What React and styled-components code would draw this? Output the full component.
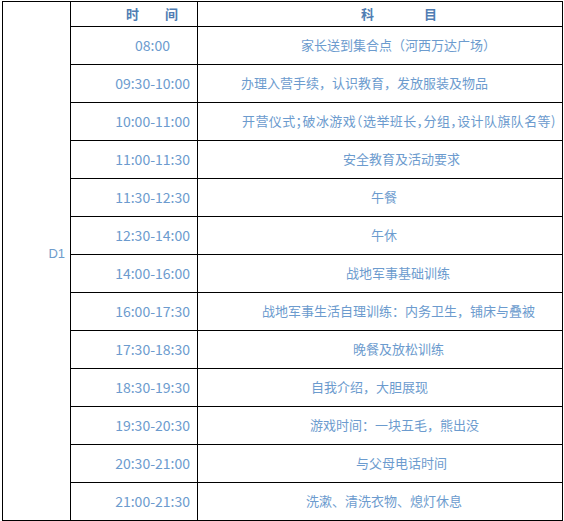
import styled, { createGlobalStyle } from 'styled-components';

const GlobalStyle = createGlobalStyle`
  html, body {
    margin: 0;
    padding: 0;
    background: #fff;
  }
  body {
    font-family: "Noto Sans CJK SC", "Microsoft YaHei", sans-serif;
  }
`;

const Page = styled.div`
  width: 564px;
  height: 521px;
  padding: 1px 0 0 2px;
  box-sizing: border-box;
  overflow: hidden;
`;

const Table = styled.table`
  width: 561px;
  border-collapse: collapse;
  table-layout: fixed;
  border: 1px solid #000;
`;

const HeadRow = styled.tr`
  height: 25px;
`;

const Row = styled.tr`
  height: 38px;
`;

const DayCell = styled.td`
  border: 1px solid #000;
  text-align: right;
  padding: 0 5px 16px 0;
  vertical-align: middle;
  color: #6f9ccc;
  font-family: "Liberation Sans", sans-serif;
  font-size: 13px;
`;

const HeadCell = styled.th`
  border: 1px solid #000;
  padding: 0 0 2px ${({ $indent }) => $indent}px;
  color: #4f7db3;
  font-size: 13px;
  font-weight: bold;
  text-align: left;
  vertical-align: middle;
  white-space: nowrap;
`;

const Spacer = styled.span`
  display: inline-block;
  width: ${({ $w }) => $w}px;
`;

const TimeCell = styled.td`
  border: 1px solid #000;
  padding: 0 ${({ $pad }) => $pad}px 2px 0;
  text-align: right;
  color: #6c9bce;
  font-size: 14px;
  vertical-align: middle;
  white-space: nowrap;
`;

const SubjectCell = styled.td`
  border: 1px solid #000;
  padding: 0 0 2px ${({ $indent }) => $indent}px;
  text-align: left;
  color: #6c9bce;
  font-size: 13px;
  vertical-align: middle;
  white-space: nowrap;
  font-feature-settings: ${({ $tight }) => ($tight ? '"halt"' : 'normal')};
  letter-spacing: ${({ $tight }) => ($tight ? '0.4px' : '0')};
`;

const schedule = [
  { time: '08:00', pad: 27, text: '家长送到集合点（河西万达广场）', indent: 103 },
  { time: '09:30-10:00', pad: 7, text: '办理入营手续，认识教育，发放服装及物品', indent: 43 },
  { time: '10:00-11:00', pad: 7, text: '开营仪式；破冰游戏（选举班长，分组，设计队旗队名等)', indent: 44, tight: true },
  { time: '11:00-11:30', pad: 7, text: '安全教育及活动要求', indent: 145 },
  { time: '11:30-12:30', pad: 7, text: '午餐', indent: 173 },
  { time: '12:30-14:00', pad: 7, text: '午休', indent: 173 },
  { time: '14:00-16:00', pad: 7, text: '战地军事基础训练', indent: 148 },
  { time: '16:00-17:30', pad: 7, text: '战地军事生活自理训练：内务卫生，铺床与叠被', indent: 64 },
  { time: '17:30-18:30', pad: 7, text: '晚餐及放松训练', indent: 155 },
  { time: '18:30-19:30', pad: 7, text: '自我介绍，大胆展现', indent: 113 },
  { time: '19:30-20:30', pad: 7, text: '游戏时间：一块五毛，熊出没', indent: 112 },
  { time: '20:30-21:00', pad: 7, text: '与父母电话时间', indent: 158 },
  { time: '21:00-21:30', pad: 7, text: '洗漱、清洗衣物、熄灯休息', indent: 108 },
];

const App = () => (
  <Page>
    <GlobalStyle />
    <Table>
      <colgroup>
        <col style={{ width: 68 }} />
        <col style={{ width: 127 }} />
        <col />
      </colgroup>
      <tbody>
        <HeadRow>
          <DayCell rowSpan={schedule.length + 1}>D1</DayCell>
          <HeadCell $indent={55}>
            时<Spacer $w={26} />间
          </HeadCell>
          <HeadCell $indent={163}>
            科<Spacer $w={50} />目
          </HeadCell>
        </HeadRow>
        {schedule.map((item) => (
          <Row key={item.time}>
            <TimeCell $pad={item.pad}>{item.time}</TimeCell>
            <SubjectCell $indent={item.indent} $tight={item.tight}>
              {item.text}
            </SubjectCell>
          </Row>
        ))}
      </tbody>
    </Table>
  </Page>
);

export default App;
